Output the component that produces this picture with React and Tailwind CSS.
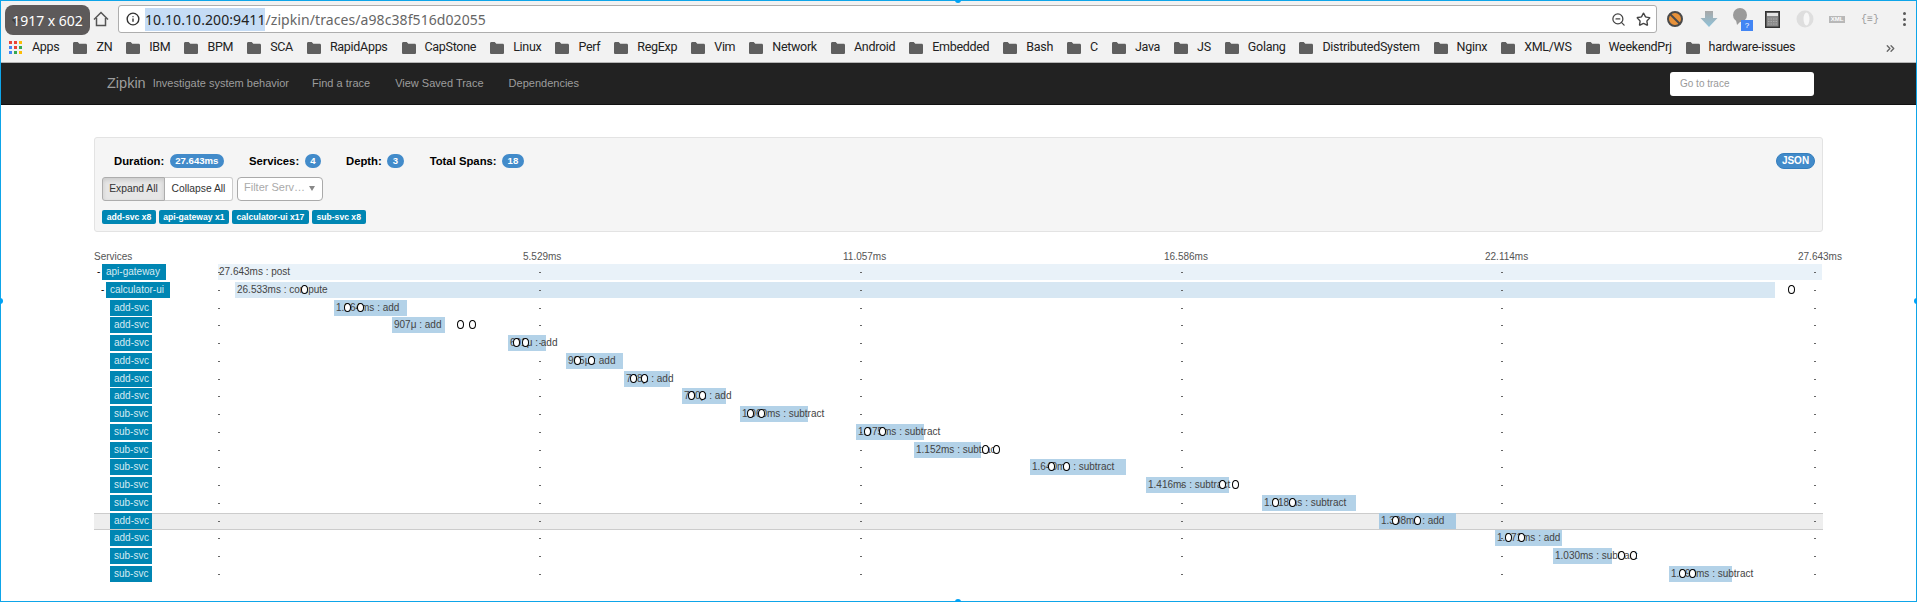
import React from 'react';
import { ArrowLeft, ArrowRight, Info, ZoomOut, Star, ChevronsRight } from 'lucide-react';

const bookmarks = [
  'ZN', 'IBM', 'BPM', 'SCA', 'RapidApps', 'CapStone', 'Linux', 'Perf', 'RegExp', 'Vim', 'Network', 'Android',
  'Embedded', 'Bash', 'C', 'Java', 'JS', 'Golang', 'DistributedSystem', 'Nginx', 'XML/WS', 'WeekendPrj', 'hardware-issues',
];

const axisLabels = [
  { text: '5.529ms', left: 305 },
  { text: '11.057ms', left: 625 },
  { text: '16.586ms', left: 946 },
  { text: '22.114ms', left: 1267 },
  { text: '27.643ms', left: 1580 },
];

const ticks = [0, 321, 642, 963, 1283, 1596];

// x positions are relative to the timeline, which starts at x=218
const spans = [
  { name: 'api-gateway', indent: 0, toggle: true, start: 0, end: 1604, inset: 1, text: '27.643ms : post', tone: 'bg-[#e9f2f9]', marks: [] },
  { name: 'calculator-ui', indent: 4, toggle: true, start: 17, end: 1557, text: '26.533ms : compute', tone: 'bg-[#d7e7f3]', marks: [86, 1573] },
  { name: 'add-svc', start: 116, end: 189, text: '1.064ms : add', marks: [129, 142] },
  { name: 'add-svc', start: 174, end: 227, text: '907μ : add', marks: [242, 254] },
  { name: 'add-svc', start: 290, end: 328, text: '601μ : add', marks: [298, 307] },
  { name: 'add-svc', start: 348, end: 405, text: '905μ : add', marks: [359, 373] },
  { name: 'add-svc', start: 406, end: 452, text: '708μ : add', marks: [415, 426] },
  { name: 'add-svc', start: 464, end: 508, text: '700μ : add', marks: [473, 484] },
  { name: 'sub-svc', start: 522, end: 590, text: '1.060ms : subtract', marks: [532, 543] },
  { name: 'sub-svc', start: 638, end: 706, text: '1.075ms : subtract', marks: [649, 664] },
  { name: 'sub-svc', start: 696, end: 763, text: '1.152ms : subtract', marks: [767, 778] },
  { name: 'sub-svc', start: 812, end: 908, text: '1.640ms : subtract', marks: [833, 848] },
  { name: 'sub-svc', start: 928, end: 1011, text: '1.416ms : subtract', marks: [1004, 1017] },
  { name: 'sub-svc', start: 1044, end: 1138, text: '1.018ms : subtract', marks: [1057, 1074] },
  { name: 'add-svc', start: 1161, end: 1238, text: '1.308ms : add', marks: [1177, 1199], active: true },
  { name: 'add-svc', start: 1277, end: 1344, text: '1.071ms : add', marks: [1290, 1303] },
  { name: 'sub-svc', start: 1335, end: 1394, text: '1.030ms : subtract', marks: [1403, 1415] },
  { name: 'sub-svc', start: 1451, end: 1514, text: '1.090ms : subtract', marks: [1464, 1474] },
];

const Folder = () => (
  <svg width="14" height="12" viewBox="0 0 14 12" className="shrink-0">
    <path d="M0 1.5C0 .7.6 0 1.3 0h3.4L6.3 1.8h6.4c.7 0 1.3.6 1.3 1.3v7.6c0 .7-.6 1.3-1.3 1.3H1.3C.6 12 0 11.4 0 10.7z" fill="#5f5f5f" />
  </svg>
);

const AppsGrid = () => (
  <svg width="13" height="13" viewBox="0 0 13 13" className="shrink-0">
    {[
      ['#ea4335', '#ea4335', '#fbbc05'],
      ['#4285f4', '#ea4335', '#34a853'],
      ['#4285f4', '#34a853', '#fbbc05'],
    ].map((row, y) =>
      row.map((fill, x) => <rect key={`${x}-${y}`} x={x * 5} y={y * 5} width="3" height="3" fill={fill} />)
    )}
  </svg>
);

const HomeOutline = () => (
  <svg width="16" height="16" viewBox="0 0 16 16" fill="none" stroke="#555" strokeWidth="1.5" className="mr-[9px] shrink-0">
    <path d="M1 8.5 8 1.5l7 7" />
    <path d="M3.5 7v7.5h9V7" />
  </svg>
);

const ExtensionIcons = () => (
  <div className="flex items-center ml-[8px] h-full">
    <svg width="18" height="18" viewBox="0 0 18 18" className="ml-[1px]">
      <circle cx="9" cy="9" r="7" fill="#e8923a" stroke="#4a4a4a" strokeWidth="2" />
      <path d="M4 4l10 10" stroke="#4a4a4a" strokeWidth="2" />
    </svg>
    <svg width="18" height="18" viewBox="0 0 18 18" className="ml-[16px]">
      <defs>
        <linearGradient id="dl" x1="0" y1="0" x2="0" y2="1">
          <stop offset="0" stopColor="#a8a8a8" />
          <stop offset="1" stopColor="#8fc3da" />
        </linearGradient>
      </defs>
      <path d="M5 1h8v7h4.5L9 17 .5 8H5z" fill="url(#dl)" />
    </svg>
    <div className="relative ml-[14px] w-[18px] h-[24px]">
      <svg width="16" height="20" viewBox="0 0 16 20">
        <circle cx="8" cy="8" r="7" fill="#9a9a9a" />
        <path d="M4 13l1 5 4-4z" fill="#9a9a9a" />
      </svg>
      <span className="absolute left-[9px] top-[13px] w-[12px] h-[11px] bg-[#4285f4] text-white text-[8px] leading-[11px] text-center">?</span>
    </div>
    <svg width="15" height="17" viewBox="0 0 15 17" className="ml-[15px]">
      <rect x=".75" y=".75" width="13.5" height="15.5" fill="#8a8a8a" stroke="#333" strokeWidth="1.5" />
      <rect x="2" y="2" width="11" height="3" fill="#e4e4e4" />
      <path d="M3 8h9M3 10.5h9M3 13h9" stroke="#aaa" strokeDasharray="1.5 1" />
    </svg>
    <svg width="18" height="18" viewBox="0 0 18 18" className="ml-[16px]">
      <circle cx="9" cy="9" r="8.5" fill="#dedede" />
      <ellipse cx="10.5" cy="9" rx="3" ry="6.5" fill="#f7f7f7" />
    </svg>
    <span className="ml-[15px] w-[16px] h-[7px] bg-[#b8b8b8] text-white text-[6px] leading-[7px] text-center font-bold">XML</span>
    <span className="ml-[16px] text-[#9a9a9a] text-[10px] font-['Liberation_Mono',monospace]">{'{≡}'}</span>
    <div className="ml-[24px] flex flex-col gap-[2.5px]">
      <span className="w-[3px] h-[3px] rounded-full bg-[#5a5a5a]" />
      <span className="w-[3px] h-[3px] rounded-full bg-[#5a5a5a]" />
      <span className="w-[3px] h-[3px] rounded-full bg-[#5a5a5a]" />
    </div>
  </div>
);

const BrowserChrome = () => (
  <div className="bg-[#f2f2f2] relative">
    <div className="absolute left-[4px] top-[4px] w-[85px] h-[30px] rounded-lg bg-[#5d5a5a] flex items-center justify-center z-10 overflow-hidden font-['Noto_Sans',sans-serif]">
      <ArrowLeft size={14} className="absolute left-[5px] text-[#3d3d3d]" />
      <ArrowRight size={14} className="absolute right-[5px] text-[#3d3d3d]" />
      <span className="relative text-white text-[14px] whitespace-nowrap">1917 x 602</span>
    </div>
    <div className="h-[32px] flex items-center pl-[92px] pt-[4px]">
      <HomeOutline />
      <div className="w-[1539px] h-[28px] bg-white border border-[#aeaeae] rounded-[3px] flex items-center pl-[7px] shrink-0 font-['Noto_Sans',sans-serif]">
        <Info size={14} strokeWidth={2.4} className="text-[#333] shrink-0" />
        <span className="ml-[5px] text-[14px] tracking-[0.08px] text-[#666] whitespace-nowrap">
          <span className="bg-[#c5dcf5] text-[#222] py-[2px]">10.10.10.200:9411</span>/zipkin/traces/a98c38f516d02055
        </span>
        <div className="ml-auto flex items-center gap-[10px] pr-[5px]">
          <ZoomOut size={15} className="text-[#444]" />
          <Star size={15} strokeWidth={2.2} className="text-[#444]" />
        </div>
      </div>
      <ExtensionIcons />
    </div>
    <div className="h-[30px] border-b border-[#b5b5b5] flex items-center pl-[8px] relative text-[#222] text-[12.5px] tracking-[-0.3px] font-['Roboto',sans-serif]">
      <AppsGrid />
      <span className="ml-[10px] mr-[14px]">Apps</span>
      <div className="flex items-center gap-[14px]">
        {bookmarks.map((name) => (
          <div key={name} className="flex items-center gap-[9px]">
            <Folder />
            <span className="whitespace-nowrap">{name}</span>
          </div>
        ))}
      </div>
      <ChevronsRight size={13} strokeWidth={2.5} className="absolute right-[19px] top-[9px] text-[#666]" />
    </div>
  </div>
);

const NavBar = () => (
  <div className="h-[42px] bg-[#222222] border-b border-[#111] flex items-center pl-[106px] pr-[102px] text-[#9d9d9d] text-[11px]">
    <span className="text-[14.5px]">Zipkin</span>
    <span className="ml-[7px]">Investigate system behavior</span>
    <span className="ml-[23px]">Find a trace</span>
    <span className="ml-[25px]">View Saved Trace</span>
    <span className="ml-[25px]">Dependencies</span>
    <div className="ml-auto w-[144px] h-[24px] bg-white rounded-[3px] pl-[10px] flex items-center text-[10px] text-[#999]">Go to trace</div>
  </div>
);

const Stat = ({ label, value, className }) => (
  <div className={`flex items-center ${className}`}>
    <span className="font-bold text-[11.3px] text-black">{label}</span>
    <span className="ml-[5.5px] h-[14px] px-[5.5px] rounded-full bg-[#428bca] text-white text-[9.6px] font-bold leading-[14px]">{value}</span>
  </div>
);

const Summary = () => (
  <div className="mt-[32px] mx-[93px] h-[95px] bg-[#f5f5f5] border border-[#e3e3e3] rounded-[3px] px-[7px] pt-[16px] relative">
    <div className="flex items-center pl-[12px] h-[14px]">
      <Stat label="Duration:" value="27.643ms" />
      <Stat label="Services:" value="4" className="ml-[25px]" />
      <Stat label="Depth:" value="3" className="ml-[25px]" />
      <Stat label="Total Spans:" value="18" className="ml-[26px]" />
    </div>
    <div className="flex mt-[9px] h-[24px] text-[10.3px] text-[#333]">
      <div className="w-[63px] bg-[#e6e6e6] border border-[#adadad] rounded-l-[3px] flex items-center justify-center shadow-[inset_0_2px_4px_rgba(0,0,0,0.125)]">Expand All</div>
      <div className="w-[68px] bg-white border border-l-0 border-[#ccc] rounded-r-[3px] flex items-center justify-center">Collapse All</div>
      <div className="ml-[4px] w-[86px] bg-white border border-[#aaa] rounded-[4px] flex items-center pl-[6px] pb-[3px] text-[11px] text-[#aaa] relative">
        Filter Serv…
        <span className="absolute right-[7px] top-[8px] border-x-[3px] border-x-transparent border-t-[5px] border-t-[#888]" />
      </div>
    </div>
    <div className="flex gap-[2.5px] mt-[9px]">
      {['add-svc x8', 'api-gateway x1', 'calculator-ui x17', 'sub-svc x8'].map((label) => (
        <span key={label} className="h-[14px] px-[4.8px] bg-[#0086b3] rounded-[2px] text-white font-bold text-[8.6px] leading-[14px] whitespace-nowrap">{label}</span>
      ))}
    </div>
    <span className="absolute right-[7px] top-[15px] h-[16px] w-[39px] rounded-full bg-[#428bca] border border-[#357ebd] text-white text-[10px] font-bold leading-[14px] text-center">JSON</span>
  </div>
);

const SpanRow = ({ span }) => {
  const tone = span.tone || (span.active ? 'bg-[#a8cae3]' : 'bg-[#b3d2e8]');
  return (
    <div className={`h-[17.76px] flex relative ${span.active ? 'bg-[#eeeeee] shadow-[inset_0_1px_0_#cccccc,inset_0_-1px_0_#cccccc]' : ''}`}>
      <div className="w-[124px] shrink-0 flex text-[10px]">
        {span.toggle ? (
          <span className={span.indent ? 'w-[12px] pl-[7px] text-black' : 'w-[8px] pl-[3px] text-black'}>-</span>
        ) : (
          <span className="w-[16px]" />
        )}
        <div className={`h-[16px] leading-[16px] pl-[4px] bg-[#0086b3] text-[#d5eaf2] ${span.toggle ? 'w-[64px]' : 'w-[42px]'}`}>
          {span.name}
        </div>
      </div>
      <div className="flex-1 relative text-[10px] text-[#444]">
        <div className={`absolute top-0 h-[16px] ${tone}`} style={{ left: span.start, width: span.end - span.start }} />
        {ticks.map((x) => (
          <span key={x} className="absolute top-[8px] w-[2px] h-[1px] bg-[#666]" style={{ left: x }} />
        ))}
        <span className="absolute top-0 leading-[16px] whitespace-nowrap" style={{ left: span.start + (span.inset || 2) }}>{span.text}</span>
        {span.marks.map((x) => (
          <span key={x} className="absolute top-[3px] w-[7px] h-[9px] rounded-[50%] border border-black bg-white" style={{ left: x - 3 }} />
        ))}
      </div>
    </div>
  );
};

const Timeline = () => (
  <div className="mt-[19px] ml-[93px] w-[1729px]">
    <div className="h-[13px] relative text-[10px] leading-[12px] text-[#555]">
      Services
      {axisLabels.map((label) => (
        <span key={label.text} className="absolute top-0 whitespace-nowrap" style={{ left: label.left + 124 }}>{label.text}</span>
      ))}
    </div>
    {spans.map((span, index) => (
      <SpanRow key={index} span={span} />
    ))}
  </div>
);

const handles = [
  'left-[955px] -top-[3px]',
  'left-[955px] -bottom-[3px]',
  '-left-[3px] top-[298px]',
  '-right-[3px] top-[298px]',
];

export default function App() {
  return (
    <div className="w-[1917px] h-[602px] relative overflow-hidden bg-white font-['Liberation_Sans',sans-serif]">
      <div className="w-full h-full border border-[#0ea5e9] overflow-hidden">
        <BrowserChrome />
        <NavBar />
        <Summary />
        <Timeline />
      </div>
      {handles.map((pos) => (
        <span key={pos} className={`absolute w-[6px] h-[6px] rounded-full bg-[#00a2f5] ${pos}`} />
      ))}
    </div>
  );
}
